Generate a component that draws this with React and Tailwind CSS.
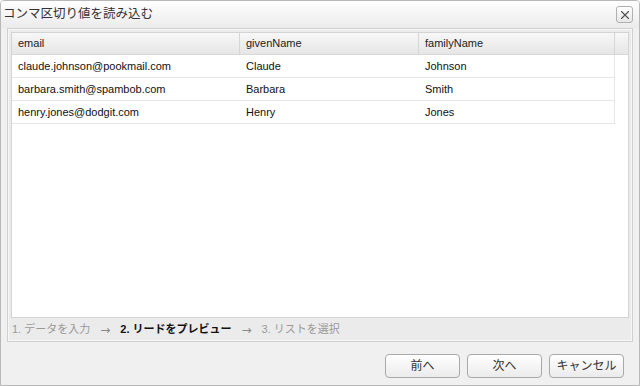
import { X } from 'lucide-react';

const rows = [
  { email: 'claude.johnson@pookmail.com', given: 'Claude', family: 'Johnson' },
  { email: 'barbara.smith@spambob.com', given: 'Barbara', family: 'Smith' },
  { email: 'henry.jones@dodgit.com', given: 'Henry', family: 'Jones' },
];

const font = { fontFamily: '"Liberation Sans", "Noto Sans CJK JP", sans-serif' };

function Btn({ children }) {
  return (
    <button className="w-[75px] h-[24px] rounded-[4px] border border-[#a9a9a9] bg-gradient-to-b from-white to-[#ebebeb] text-[12px] text-[#333] shadow-[inset_0_1px_0_#fff]">
      {children}
    </button>
  );
}

function Arrow() {
  return <span className="font-['DejaVu_Sans'] text-[12px] text-[#8a8a8a]">→</span>;
}

export default function App() {
  return (
    <div style={font} className="w-[640px] h-[386px] bg-[#f0f0f0] border border-[#b8b8b8] rounded-t-[4px] flex flex-col overflow-hidden">
      <div className="h-[27px] flex items-center justify-between pl-[2px] pr-[6px] bg-gradient-to-b from-white to-[#ebebeb]">
        <span className="text-[12.5px] text-[#333]">コンマ区切り値を読み込む</span>
        <div className="w-[17px] h-[17px] rounded-[3px] border border-[#b0b0b0] bg-gradient-to-b from-white to-[#e6e6e6] flex items-center justify-center">
          <X className="w-[14px] h-[14px] text-[#555]" strokeWidth={2} />
        </div>
      </div>

      <div className="h-[314px] flex flex-col px-[6px]">
        <div className="flex-1 flex flex-col border border-[#cfcfcf] bg-[#ebebeb] shadow-[inset_0_0_0_1px_#f7f7f7]">
          <div className="flex-1 mx-[3px] mt-[3px] bg-white border border-[#d4d4d4] flex flex-col">
            <div className="flex h-[22px] bg-gradient-to-b from-[#f7f7f7] to-[#e6e6e6] border-b border-[#d8d8d8] text-[11px] text-[#222]">
              <div className="w-[228px] flex items-center pl-[6px] border-r border-[#d6d6d6]">email</div>
              <div className="w-[179px] flex items-center pl-[6px] border-r border-[#d6d6d6]">givenName</div>
              <div className="w-[196px] flex items-center pl-[6px] border-r border-[#d6d6d6]">familyName</div>
              <div className="flex-1" />
            </div>
            {rows.map((r, i) => (
              <div key={i} className="flex h-[23px] w-[603px] border-b border-r border-[#e6e6e6] bg-white text-[11px] text-[#111]">
                <div className="w-[228px] flex items-center pl-[6px]">{r.email}</div>
                <div className="w-[179px] flex items-center pl-[6px]">{r.given}</div>
                <div className="flex-1 flex items-center pl-[6px]">{r.family}</div>
              </div>
            ))}
          </div>
          <div className="h-[23px] flex items-center pl-[4px] text-[11px] text-[#999] gap-[10px]">
            <span>1. データを入力</span>
            <Arrow />
            <span className="text-[#111] font-semibold">2. リードをプレビュー</span>
            <Arrow />
            <span>3. リストを選択</span>
          </div>
        </div>
      </div>

      <div className="flex-1 flex items-start justify-end gap-[7px] pr-[15px] pt-[12px]">
        <Btn>前へ</Btn>
        <Btn>次へ</Btn>
        <Btn>キャンセル</Btn>
      </div>
    </div>
  );
}
